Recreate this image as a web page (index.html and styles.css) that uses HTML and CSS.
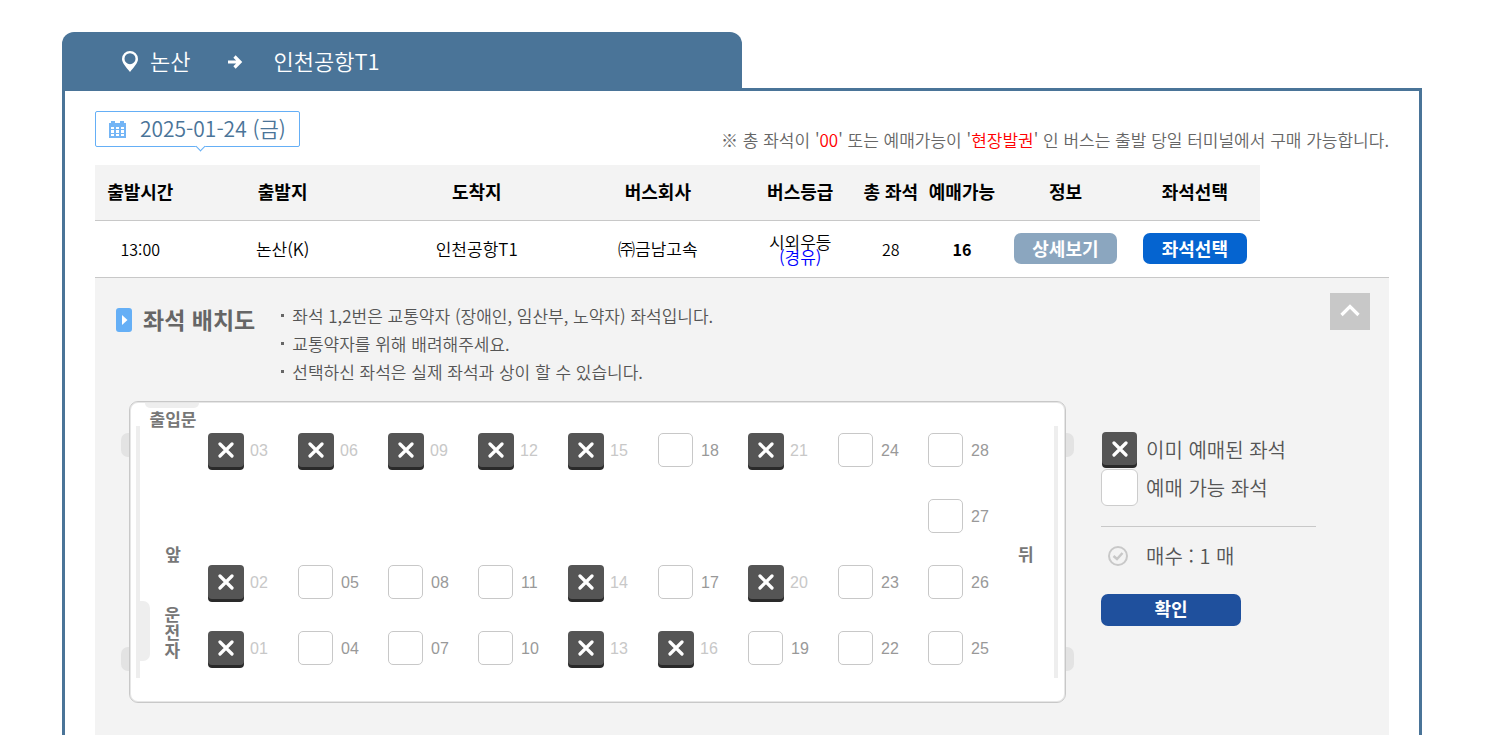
FILE: index.html
```html
<!DOCTYPE html>
<html lang="ko">
<head>
  <meta charset="UTF-8" />
  <meta name="viewport" content="width=device-width, initial-scale=1.0"/>
  <title>좌석 선택</title>
  <link rel="stylesheet" href="styles.css">
</head>
<body>

  <!-- Route tab -->
  <header class="route">
    <svg class="route-pin" viewBox="0 0 16 21" width="16" height="21"><path fill="#fff" fill-rule="evenodd" d="M8 0a8 8 0 0 1 8 8c0 4-4.500 8.500-8 13C4.500 16.500 0 12 0 8a8 8 0 0 1 8-8zm0 2.200A5.500 5.500 0 1 0 8 13.200 5.500 5.500 0 0 0 8 2.200z"/></svg>
    <span>논산</span>
    <svg class="route-arrow" viewBox="0 0 15 14" width="15" height="14"><path fill="none" stroke="#fff" stroke-width="3.200" d="M0 7h12M6.500 1.500L12 7l-5.500 5.500"/></svg>
    <span>인천공항T1</span>
  </header>

  <main class="box">
    <div class="box-top">
      <div class="date">
        <svg viewBox="0 0 17 17" width="17" height="17">
          <path fill="#74b5f5" fill-rule="evenodd" d="M0 2h2V0h4v2h5V0h4v2h2v15H0zM2 6v2h3V6zM7 6v2h3V6zM12 6v2h3V6zM2 9v3h3V9zM7 9v3h3V9zM12 9v3h3V9zM2 13v2h3v-2zM7 13v2h3v-2zM12 13v2h3v-2z"/>
        </svg>
        <span>2025-01-24 (금)</span>
      </div>
      <p class="notice">※ 총 좌석이 '<em>00</em>' 또는 예매가능이 '<em>현장발권</em>' 인 버스는 출발 당일 터미널에서 구매 가능합니다.</p>
    </div>

    <!-- Bus list -->
    <table class="bus-list">
      <colgroup>
        <col class="w7"><col class="w15"><col class="w15"><col class="w13"><col class="w9">
        <col class="w5"><col class="w6"><col class="w10"><col class="w10"><col class="w10">
      </colgroup>
      <thead>
        <tr>
          <th>출발시간</th>
          <th>출발지</th>
          <th>도착지</th>
          <th>버스회사</th>
          <th>버스등급</th>
          <th>총 좌석</th>
          <th>예매가능</th>
          <th>정보</th>
          <th>좌석선택</th>
        </tr>
      </thead>
      <tbody>
        <tr>
          <td class="num">13:00</td>
          <td>논산(K)</td>
          <td>인천공항T1</td>
          <td>㈜금남고속</td>
          <td class="grade">시외우등<br><span>(경유)</span></td>
          <td class="num">28</td>
          <td class="num"><b>16</b></td>
          <td><button type="button" class="btn btn-info">상세보기</button></td>
          <td><button type="button" class="btn btn-seat">좌석선택</button></td>
          <td></td>
        </tr>
      </tbody>
    </table>

    <!-- Seat map -->
    <section class="panel">
      <div class="panel-head">
        <svg class="panel-icon" viewBox="0 0 16 24" width="16" height="24"><rect width="16" height="24" rx="3" fill="#65aff6"/><path fill="#fff" d="M6 7l5.500 5L6 17z"/></svg>
        <h2>좌석 배치도</h2>
        <ul>
          <li>좌석 1,2번은 교통약자 (장애인, 임산부, 노약자) 좌석입니다.</li>
          <li>교통약자를 위해 배려해주세요.</li>
          <li>선택하신 좌석은 실제 좌석과 상이 할 수 있습니다.</li>
        </ul>
        <button type="button" class="close" aria-label="닫기">
          <svg viewBox="0 0 20 14" width="20" height="14"><path fill="none" stroke="#fff" stroke-width="3.200" d="M1.500 12L10 3.500l8.500 8.500"/></svg>
        </button>
      </div>

      <form class="panel-body">
        <div class="bus">
          <i class="wheel wheel-lt"></i><i class="wheel wheel-lb"></i>
          <i class="wheel wheel-rt"></i><i class="wheel wheel-rb"></i>
          <i class="door"></i><i class="driver-seat"></i>
          <i class="rail rail-left"></i><i class="rail rail-right"></i>

          <div class="bus-front">
            <span>출입문</span>
            <span class="front">앞</span>
            <span class="driver">운전자</span>
          </div>

          <div class="seats">
            <label><input type="checkbox" disabled><span>03</span></label>
            <label><input type="checkbox" disabled><span>06</span></label>
            <label><input type="checkbox" disabled><span>09</span></label>
            <label><input type="checkbox" disabled><span>12</span></label>
            <label><input type="checkbox" disabled><span>15</span></label>
            <label><input type="checkbox"><span>18</span></label>
            <label><input type="checkbox" disabled><span>21</span></label>
            <label><input type="checkbox"><span>24</span></label>
            <label><input type="checkbox"><span>28</span></label>

            <label class="last"><input type="checkbox"><span>27</span></label>

            <label><input type="checkbox" disabled><span>02</span></label>
            <label><input type="checkbox"><span>05</span></label>
            <label><input type="checkbox"><span>08</span></label>
            <label><input type="checkbox"><span>11</span></label>
            <label><input type="checkbox" disabled><span>14</span></label>
            <label><input type="checkbox"><span>17</span></label>
            <label><input type="checkbox" disabled><span>20</span></label>
            <label><input type="checkbox"><span>23</span></label>
            <label><input type="checkbox"><span>26</span></label>

            <label><input type="checkbox" disabled><span>01</span></label>
            <label><input type="checkbox"><span>04</span></label>
            <label><input type="checkbox"><span>07</span></label>
            <label><input type="checkbox"><span>10</span></label>
            <label><input type="checkbox" disabled><span>13</span></label>
            <label><input type="checkbox" disabled><span>16</span></label>
            <label><input type="checkbox"><span>19</span></label>
            <label><input type="checkbox"><span>22</span></label>
            <label><input type="checkbox"><span>25</span></label>
          </div>

          <div class="bus-back">뒤</div>
        </div>

        <div class="legend">
          <p><i class="mark mark-taken"></i>이미 예매된 좌석</p>
          <p><i class="mark mark-free"></i>예매 가능 좌석</p>
          <hr>
          <p class="count">
            <svg viewBox="0 0 20 20" width="20" height="20"><circle cx="10" cy="10" r="9" fill="none" stroke="#c8c8c8" stroke-width="2"/><path fill="none" stroke="#c8c8c8" stroke-width="2.500" d="M5.500 10l3.500 3 5.500-6"/></svg>
            매수 : 1 매
          </p>
          <button type="submit" class="confirm">확인</button>
        </div>
      </form>
    </section>
  </main>

</body>
</html>
```

FILE: styles.css
```css
* {
  margin: 0;
  padding: 0;
  box-sizing: border-box;
}

body {
  display: flex;
  flex-direction: column;
  max-width: 1484px;
  min-height: 100vh;
  padding: 32px 62px 0;
  background: #fff;
  color: #000;
  font-family: "Noto Sans CJK KR", sans-serif;
  font-size: 17px;
  font-weight: 350;
}

button,
input {
  font-family: inherit;
}

/* Route tab */
.route {
  display: flex;
  align-items: center;
  width: 50%;
  height: 56px;
  padding: 3px 60px 0;
  border-radius: 12px 12px 0 0;
  background: #4a7498;
  color: #fff;
  font-size: 22px;
  line-height: 28px;
}

.route span {
  padding-bottom: 3px;
}

.route-pin {
  margin-right: 12px;
}

.route-arrow {
  margin: 0 30px 0 38px;
}

/* Main box */
.box {
  display: flex;
  flex: 1;
  flex-direction: column;
  padding: 20px 30px 0;
  border: 3px solid #4a7498;
  border-bottom: 0;
}

.box-top {
  display: flex;
  justify-content: space-between;
  height: 54px;
}

.date {
  display: flex;
  position: relative;
  align-items: center;
  gap: 14px;
  height: 36px;
  padding: 0 13px;
  border: 1px solid #65aff6;
  border-radius: 2px;
  color: #4a7498;
  font-size: 21px;
  line-height: 28px;
}

.date span {
  padding-bottom: 3px;
}

.date::after {
  content: "";
  position: absolute;
  bottom: -4px;
  left: 50%;
  width: 6px;
  height: 6px;
  border: solid #65aff6;
  border-width: 0 1px 1px 0;
  background: #fff;
  transform: rotate(45deg);
}

.notice {
  margin-top: 15px;
  color: #666;
  line-height: 28px;
}

.notice em {
  color: #f00;
  font-style: normal;
}

/* Bus list */
.bus-list {
  width: 100%;
  border-collapse: collapse;
  table-layout: fixed;
  text-align: center;
}

.w5 { width: 5%; }
.w6 { width: 6%; }
.w7 { width: 7%; }
.w9 { width: 9%; }
.w10 { width: 10%; }
.w13 { width: 13%; }
.w15 { width: 15%; }

.bus-list th {
  height: 55px;
  padding-bottom: 3px;
  border-bottom: 1px solid #c8c8c8;
  background: #f3f3f3;
  font-size: 18px;
  font-weight: bold;
  white-space: nowrap;
}

.bus-list td {
  height: 57px;
  border-bottom: 1px solid #c8c8c8;
  line-height: 24px;
}

.bus-list .num {
  font-size: 16px;
}

.bus-list .grade {
  line-height: 15px;
}

.num b {
  font-weight: bold;
}

.grade span {
  color: #00f;
}

.btn {
  width: 80%;
  height: 31px;
  padding-bottom: 2px;
  border: 0;
  border-radius: 7px;
  color: #fff;
  font-size: 18px;
  font-weight: bold;
  line-height: 28px;
  cursor: pointer;
}

.btn-info {
  background: #8ba6bf;
}

.btn-seat {
  background: #0564d0;
}

/* Seat panel */
.panel {
  flex: 1;
  padding: 15px 19px 30px 21px;
  background: #f3f3f3;
  color: #555;
}

.panel-head {
  display: flex;
  align-items: flex-start;
}

.panel-icon {
  margin: 15px 11px 0 0;
}

.panel-head h2 {
  margin-top: 10px;
  color: #666;
  font-size: 23px;
  line-height: 32px;
}

.panel-head ul {
  flex: 1;
  margin: 9px 0 0 26px;
  list-style: none;
  line-height: 28px;
}

.panel-head li {
  display: flex;
  gap: 8px;
}

.panel-head li::before {
  content: "";
  width: 3px;
  height: 3px;
  margin-top: 12px;
  background: #666;
}

.close {
  width: 40px;
  height: 37px;
  border: 0;
  background: #c8c8c8;
  cursor: pointer;
}

.panel-body {
  display: flex;
  gap: 35px;
  margin: 15px 54px 0 13px;
}

/* Bus */
.bus {
  display: flex;
  position: relative;
  flex: 1;
  height: 302px;
  border: 1px solid #c8c8c8;
  border-radius: 9px;
  background: #fff;
  box-shadow: inset 0 0 0 1px #e6e6e6;
}

.wheel,
.door,
.driver-seat,
.rail {
  position: absolute;
  background: #eee;
}

.wheel {
  width: 8px;
  height: 24px;
  background: #e3e3e3;
}

.wheel-lt,
.wheel-lb {
  left: -9px;
  border-radius: 7px 0 0 7px;
}

.wheel-rt,
.wheel-rb {
  right: -9px;
  border-radius: 0 7px 7px 0;
}

.wheel-lt,
.wheel-rt {
  top: 31px;
}

.wheel-lb,
.wheel-rb {
  bottom: 31px;
}

.door {
  top: 1px;
  left: 15px;
  width: 54px;
  height: 5px;
  border-radius: 0 0 8px 8px;
}

.driver-seat {
  bottom: 41px;
  left: 10px;
  width: 10px;
  height: 60px;
  border-radius: 0 7px 7px 0;
}

.rail {
  top: 24px;
  bottom: 24px;
  width: 4px;
}

.rail-left {
  left: 6px;
}

.rail-right {
  right: 7px;
}

.bus-front,
.bus-back {
  color: #777;
  font-size: 17px;
  font-weight: bold;
  line-height: 18px;
}

.bus-front {
  display: flex;
  flex-direction: column;
  align-items: center;
  width: 78px;
  padding: 8px 0 0 8px;
}

.front {
  margin-top: 117px;
}

.driver {
  width: 17px;
  margin-top: 42px;
  word-break: break-all;
}

.bus-back {
  width: 47px;
  padding-top: 143px;
}

.seats {
  display: grid;
  flex: 1;
  grid-template-columns: repeat(9, 1fr);
  grid-auto-rows: 66px;
  margin-top: 31px;
}

.seats label {
  display: flex;
  align-items: flex-start;
  gap: 8px;
  color: #999;
  font-family: "Liberation Sans", sans-serif;
  font-size: 16px;
  line-height: 35px;
}

.seats .last {
  grid-column: 9;
}

.seats input {
  width: 35px;
  height: 34px;
  border: 1px solid #c8c8c8;
  border-radius: 5px;
  background: #fff;
  appearance: none;
}

.seats input:checked {
  background: #65aff6;
}

.seats input:disabled,
.mark-taken {
  border: 0;
  border-radius: 4px;
  background: #555 url("data:image/svg+xml,%3Csvg xmlns='http://www.w3.org/2000/svg' width='16' height='18'%3E%3Cpath d='M2 2l12 12M14 2L2 14' stroke='white' stroke-width='3.200' stroke-linecap='round'/%3E%3C/svg%3E") center no-repeat;
  box-shadow: inset 0 -3px #2a2a2a;
}

.seats input:disabled {
  width: 36px;
  height: 37px;
}

.seats input:disabled + span {
  margin-left: -2px;
  color: #c8c8c8;
}

/* Legend */
.legend {
  width: 215px;
  padding-top: 30px;
  font-size: 20px;
}

.legend p {
  display: flex;
  align-items: center;
  gap: 8px;
  height: 38px;
  line-height: 36px;
}

.mark {
  width: 37px;
  height: 37px;
}

.mark-taken {
  width: 35px;
  height: 36px;
  margin: 0 1px;
}

.mark-free {
  border: 1px solid #ccc;
  border-radius: 6px;
  background: #fff;
}

.legend hr {
  margin: 19px 0 10px;
  border: 0;
  border-top: 1px solid #c8c8c8;
}

.legend .count {
  gap: 18px;
  padding-left: 7px;
}

.confirm {
  display: block;
  width: 140px;
  height: 32px;
  margin-top: 19px;
  padding-bottom: 3px;
  border: 0;
  border-radius: 7px;
  background: #1f509d;
  color: #fff;
  font-size: 18px;
  font-weight: bold;
  line-height: 28px;
  cursor: pointer;
}
```
